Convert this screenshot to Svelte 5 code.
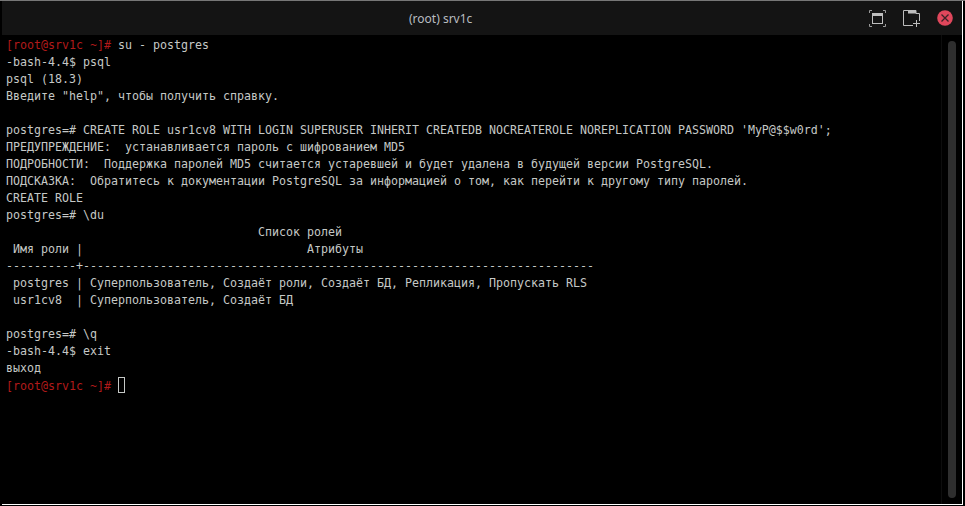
<script>
	const lines = [
		[{ red: '[root@srv1c ~]#' }, ' su - postgres'],
		['-bash-4.4$ psql'],
		['psql (18.3)'],
		['Введите "help", чтобы получить справку.'],
		[''],
		["postgres=# CREATE ROLE usr1cv8 WITH LOGIN SUPERUSER INHERIT CREATEDB NOCREATEROLE NOREPLICATION PASSWORD 'MyP@$$w0rd';"],
		['ПРЕДУПРЕЖДЕНИЕ:  устанавливается пароль с шифрованием MD5'],
		['ПОДРОБНОСТИ:  Поддержка паролей MD5 считается устаревшей и будет удалена в будущей версии PostgreSQL.'],
		['ПОДСКАЗКА:  Обратитесь к документации PostgreSQL за информацией о том, как перейти к другому типу паролей.'],
		['CREATE ROLE'],
		['postgres=# \\du'],
		['                                    Список ролей'],
		[' Имя роли |                                Атрибуты'],
		['----------+-------------------------------------------------------------------------'],
		[' postgres | Суперпользователь, Создаёт роли, Создаёт БД, Репликация, Пропускать RLS'],
		[' usr1cv8  | Суперпользователь, Создаёт БД'],
		[''],
		['postgres=# \\q'],
		['-bash-4.4$ exit'],
		['выход'],
		[{ red: '[root@srv1c ~]#' }, ' ', { cursor: true }]
	];
</script>

<div class="screen">
	<div class="window">
		<header class="titlebar">
			<span class="title">(root) srv1c</span>
			<div class="controls">
				<svg width="17" height="17" viewBox="0 0 17 17" fill="none" stroke="#9a9a9a">
					<path d="M.5 3V.5H3M14 .5H16.500V3M.5 14V16.500H3M14 16.500H16.500V14" stroke-width="1" />
					<rect x="3.500" y="3.500" width="10" height="10" stroke="#bdbdbd" stroke-width="1" />
					<rect x="3" y="3" width="11" height="3" fill="#bdbdbd" stroke="none" />
				</svg>
				<svg width="17" height="17" viewBox="0 0 17 17" fill="none" stroke="#bdbdbd">
					<path d="M10 15.500H.5V.5H13V3.500H16.500V11" stroke-width="1" />
					<rect x="5" y="0" width="8" height="3.500" fill="#bdbdbd" stroke="none" />
					<path d="M13.500 10V17M10 13.500H17" stroke-width="1" />
				</svg>
				<svg width="16" height="16" viewBox="0 0 16 16">
					<circle cx="8" cy="8" r="7.800" fill="#e0475c" />
					<path d="M4.500 4.500L11.500 11.500M11.500 4.500L4.500 11.500" stroke="#3a2226" stroke-width="1.300" fill="none" />
				</svg>
			</div>
		</header>
		<div class="body">
			<pre class="terminal">{#each lines as line}<div class="line">{#each line as part}{#if typeof part === 'string'}{part}{:else if part.red}<span class="red">{part.red}</span>{:else}<span class="cursor"></span>{/if}{/each}</div>{/each}</pre>
			<div class="scrollbar"><div class="thumb"></div></div>
		</div>
	</div>
</div>

<style>
	:global(body) {
		background: #000;
		overflow: hidden;
	}
	.screen {
		width: 965px;
		height: 506px;
		box-sizing: border-box;
		padding-left: 2px;
		border-top: 1px solid #777;
	}
	.window {
		width: 961px;
		height: 504px;
		display: flex;
		flex-direction: column;
		background: #000;
		border-right: 1px solid #fff;
		border-bottom: 1px solid #fff;
		box-sizing: border-box;
	}
	.titlebar {
		height: 34px;
		flex: none;
		background: #141414;
		display: flex;
		align-items: center;
		padding-left: 407px;
		padding-right: 9px;
	}
	.title {
		font: 12px "Noto Sans", sans-serif;
		color: #b9bdc0;
	}
	.controls {
		margin-left: auto;
		display: flex;
		align-items: center;
		gap: 17px;
	}
	.body {
		flex: 1;
		display: flex;
		min-height: 0;
	}
	.terminal {
		flex: 1;
		margin: 0;
		padding: 2px 0 0 4px;
		font: 11.63px/17px "DejaVu Sans Mono", monospace;
		color: #c5c8c6;
	}
	.line {
		height: 17px;
	}
	.red {
		color: #b11a1a;
	}
	.cursor {
		display: inline-block;
		width: 5px;
		height: 14px;
		border: 1px solid #c5c8c6;
		vertical-align: -3px;
	}
	.scrollbar {
		width: 21px;
		flex: none;
		padding: 6px;
		border-left: 1px solid #0d0d0d;
		box-sizing: border-box;
	}
	.thumb {
		width: 8px;
		height: 100%;
		background: #2e2e2e;
		border-radius: 4px;
	}
</style>
